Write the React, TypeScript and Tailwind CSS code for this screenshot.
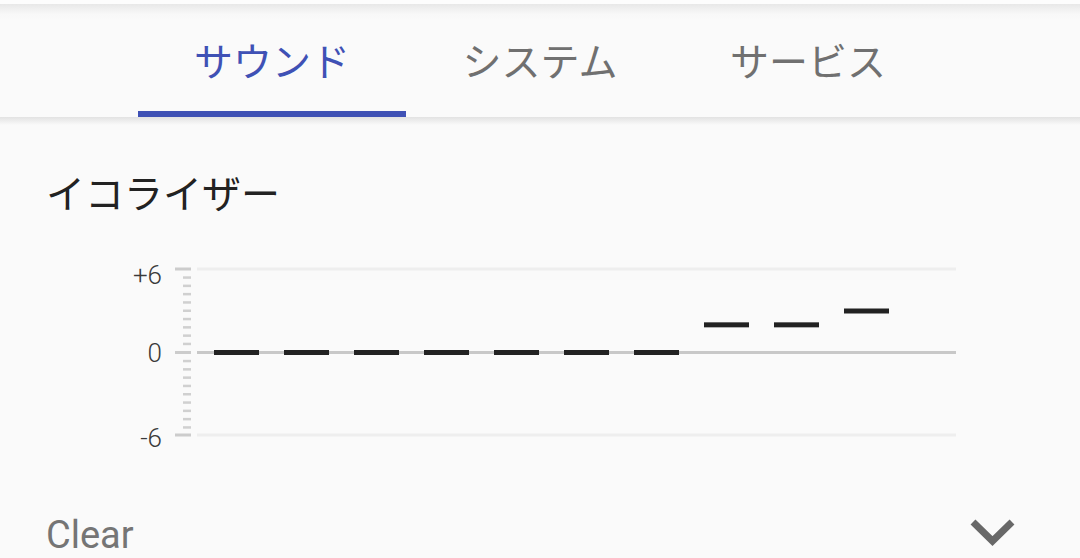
const tabs = ["サウンド", "システム", "サービス"];
const bands = [0, 0, 0, 0, 0, 0, 0, 2, 2, 3];

const jp = "font-['Noto_Sans_CJK_JP','Noto_Sans',sans-serif]";

function Equalizer() {
  const zero = 102.5;
  const perDb = 83 / 6;
  const minor: number[] = [];
  for (let i = 1; i < 10; i++) {
    minor.push(19 + (83 / 10) * i);
    minor.push(zero + (83 / 10) * i);
  }
  return (
    <svg width="1080" height="210" className="block">
      <g fill="#3a3a3a" fontFamily="Roboto, 'Liberation Sans', sans-serif" fontSize="26" fontWeight="300" textAnchor="end">
        <text x="162" y="34">+6</text>
        <text x="162" y="112">0</text>
        <text x="162" y="197">-6</text>
      </g>
      {[19, zero, 185].map((y) => (
        <rect key={y} x="175" y={y - 1.5} width="16" height="3" fill="#cccccc" />
      ))}
      {minor.map((y) => (
        <rect key={y} x="183" y={y - 1} width="8" height="2.5" fill="#d0d0d0" />
      ))}
      <rect x="197" y="17.5" width="759" height="3" fill="#eeeeee" />
      <rect x="197" y="183.5" width="759" height="3" fill="#eeeeee" />
      <rect x="197" y={zero - 1.5} width="759" height="3" fill="#c8c8c8" />
      {bands.map((v, i) => (
        <rect key={i} x={214 + 70 * i} y={zero - v * perDb - 2.5} width="45" height="5" fill="#222222" />
      ))}
    </svg>
  );
}

export default function App() {
  return (
    <div className="w-[1080px] h-[558px] overflow-hidden bg-[#fafafa]">
      <div className="h-[4px] bg-[#fdfdfd]" />
      <div className="flex pl-[138px] bg-[linear-gradient(to_bottom,#e8e8e8,#f8f8f8_10px,#fafafa_16px)]">
        {tabs.map((t, i) => (
          <div key={t} className="w-[268px] h-[113px] flex flex-col">
            <div
              className={`flex-1 flex items-center justify-center pt-[4px] text-[39px] ${jp} ${
                i === 0 ? "text-[#3f51b5]" : "text-[#707070]"
              }`}
            >
              {t}
            </div>
            <div className={`h-[6px] ${i === 0 ? "bg-[#3f51b5]" : ""}`} />
          </div>
        ))}
      </div>
      <div className="h-[8px] bg-[linear-gradient(to_bottom,#e2e2e2,#fafafa)]" />
      <div className={`px-[46px] pt-[38px] text-[39px] leading-[56px] text-[#222222] ${jp}`}>イコライザー</div>
      <div className="mt-[31px]">
        <Equalizer />
      </div>
      <div className="flex items-center justify-between pl-[46px] pr-[62px] mt-[53px]">
        <span className="text-[38px] leading-[44px] text-[#757575] font-['Roboto',sans-serif]">Clear</span>
        <svg width="50" height="32" viewBox="0 0 50 32">
          <polyline points="5,3 24.5,22 44,3" fill="none" stroke="#686868" strokeWidth="7" />
        </svg>
      </div>
    </div>
  );
}
